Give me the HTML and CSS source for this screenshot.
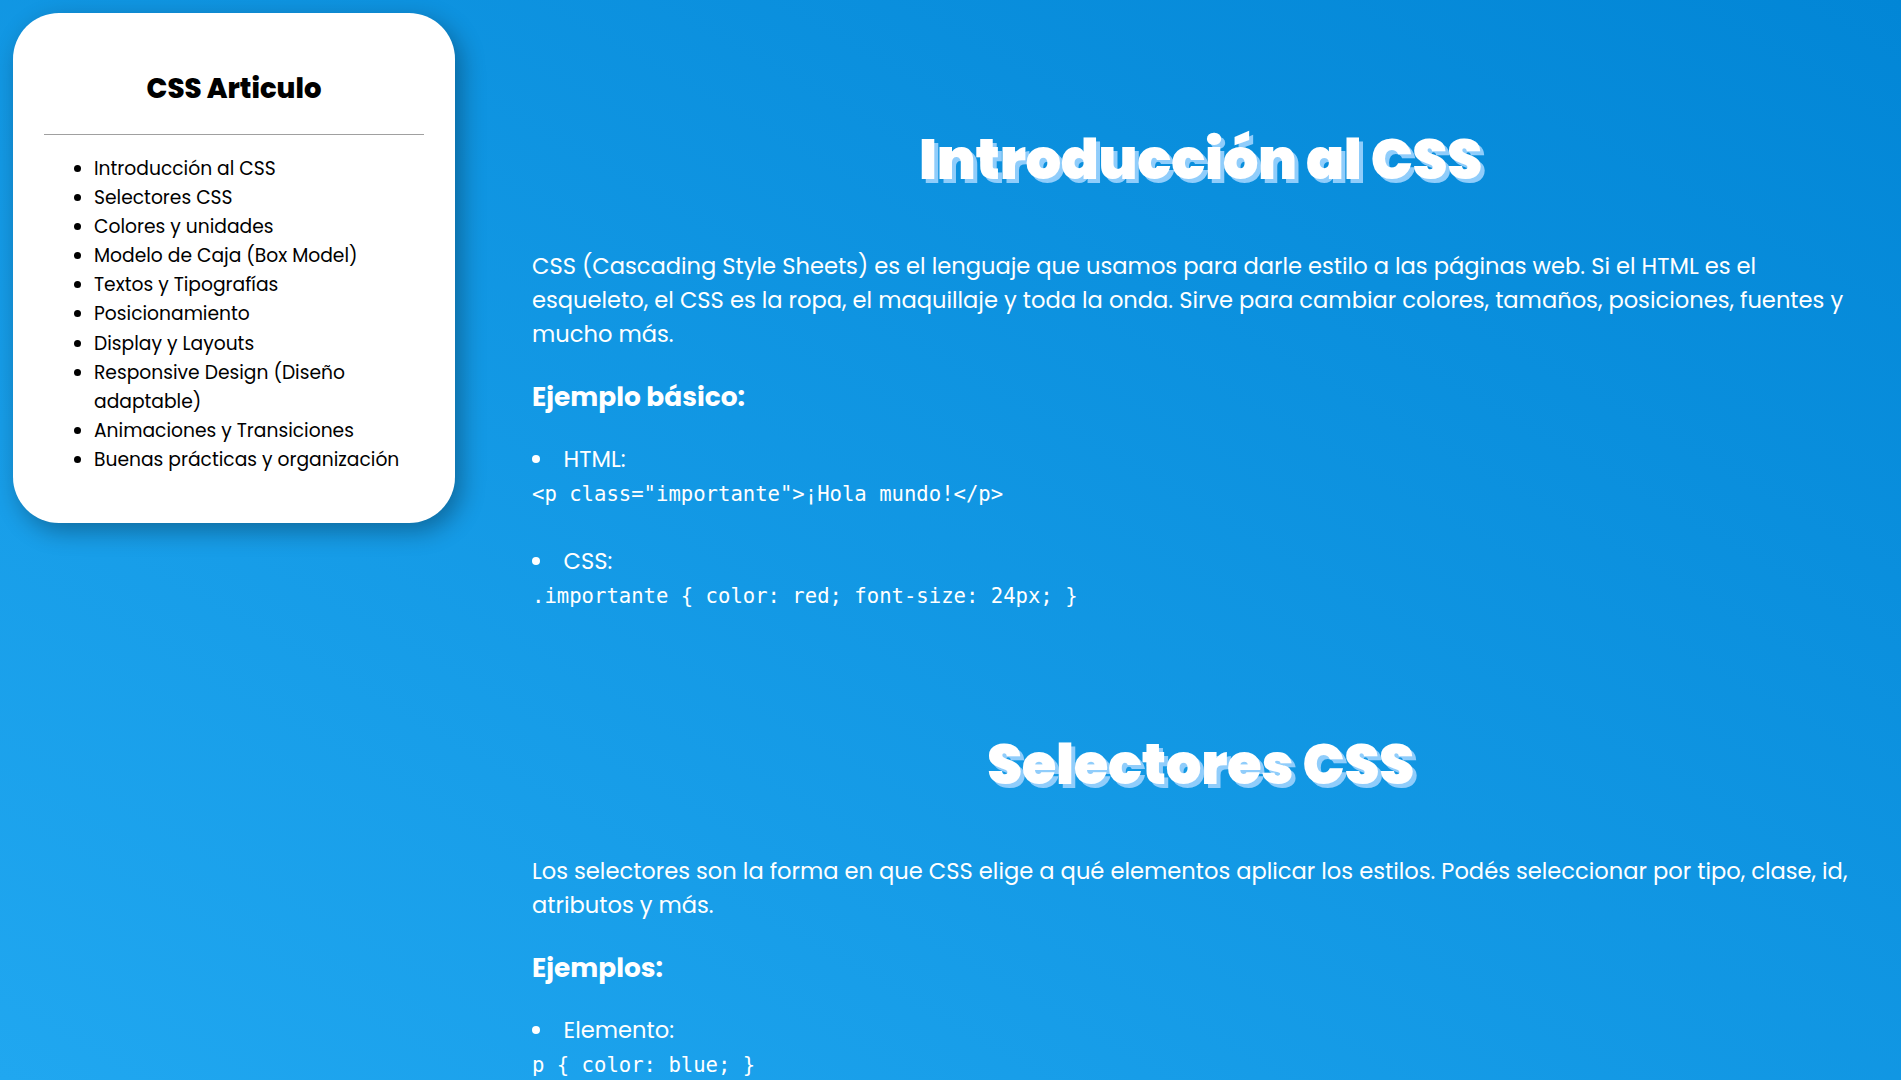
FILE: index.html
```html
<!DOCTYPE html>
<html lang="es">
<head>
<meta charset="utf-8">
<title>CSS Articulo</title>
<link rel="stylesheet" href="styles.css">
</head>
<body>
<div class="layout">
  <aside class="sidebar">
    <h2 class="sidebar-title">CSS Articulo</h2>
    <hr class="sidebar-rule">
    <ul class="toc">
      <li>Introducción al CSS</li>
      <li>Selectores CSS</li>
      <li>Colores y unidades</li>
      <li>Modelo de Caja (Box Model)</li>
      <li>Textos y Tipografías</li>
      <li>Posicionamiento</li>
      <li>Display y Layouts</li>
      <li>Responsive Design (Diseño adaptable)</li>
      <li>Animaciones y Transiciones</li>
      <li>Buenas prácticas y organización</li>
    </ul>
  </aside>
  <main class="content">
    <section class="section">
      <h1 class="section-title">Introducción al CSS</h1>
      <p class="text">CSS (Cascading Style Sheets) es el lenguaje que usamos para darle estilo a las páginas web. Si el HTML es el esqueleto, el CSS es la ropa, el maquillaje y toda la onda. Sirve para cambiar colores, tamaños, posiciones, fuentes y mucho más.</p>
      <h3 class="sub">Ejemplo básico:</h3>
      <ul class="examples">
        <li>HTML:<pre class="code">&lt;p class="importante"&gt;¡Hola mundo!&lt;/p&gt;</pre></li>
        <li>CSS:<pre class="code">.importante { color: red; font-size: 24px; }</pre></li>
      </ul>
    </section>
    <section class="section">
      <h1 class="section-title">Selectores CSS</h1>
      <p class="text">Los selectores son la forma en que CSS elige a qué elementos aplicar los estilos. Podés seleccionar por tipo, clase, id, atributos y más.</p>
      <h3 class="sub">Ejemplos:</h3>
      <ul class="examples">
        <li>Elemento:<pre class="code">p { color: blue; }</pre></li>
        <li>Clase:<pre class="code">.titulo { font-weight: bold; }</pre></li>
      </ul>
    </section>
  </main>
</div>
</body>
</html>
```
FILE: styles.css
```css
html, body {
  margin: 0;
  padding: 0;
}
body {
  font-family: "Poppins", "Inter", "Open Sans", sans-serif;
  color: #fff;
  background: linear-gradient(to top right, #20a7f0, #0286d6) fixed;
  min-height: 100vh;
}
.layout {
  display: flex;
  align-items: flex-start;
  padding: 13px 0 0 13px;
  gap: 45px;
}
.sidebar {
  flex: 0 0 442px;
  box-sizing: border-box;
  background: #fff;
  color: #000;
  border-radius: 46px;
  padding: 31px 31px 49px;
  box-shadow: 6px 8px 24px rgba(0, 0, 0, 0.32);
}
.sidebar-title {
  margin: 24px 0 0;
  font-size: 27.5px;
  line-height: 42px;
  font-weight: 800;
  text-align: center;
}
.sidebar-rule {
  border: 0;
  border-top: 1px solid #a0a0a0;
  margin: 24px 0 19px;
}
.toc {
  margin: 0;
  padding: 0 0 0 50px;
  font-size: 18.7px;
  line-height: 29.1px;
}
.content {
  flex: 1;
  padding: 0 32px 0;
  min-width: 0;
}
.section {
  padding-bottom: 60px;
}
.section-title {
  margin: 113px 0 0;
  font-size: 56px;
  line-height: 67px;
  font-weight: 900;
  text-align: center;
  color: #fff;
  text-shadow: 4px 4px 0 #90cdfb;
  letter-spacing: -0.3px;
}
.section + .section .section-title {
  margin-top: 57px;
}
.text {
  margin: 56px 0 0;
  font-size: 22.6px;
  line-height: 34px;
}
.sub {
  margin: 28px 0 0;
  font-size: 26.4px;
  line-height: 36px;
  font-weight: 700;
}
.examples {
  margin: 27px 0 0;
  padding: 0;
  list-style-position: inside;
  font-size: 22.6px;
  line-height: 35px;
}
.examples li + li {
  margin-top: 32px;
}
.code {
  margin: 0;
  font-family: "DejaVu Sans Mono", monospace;
  font-size: 20.6px;
  line-height: 35px;
}
```
